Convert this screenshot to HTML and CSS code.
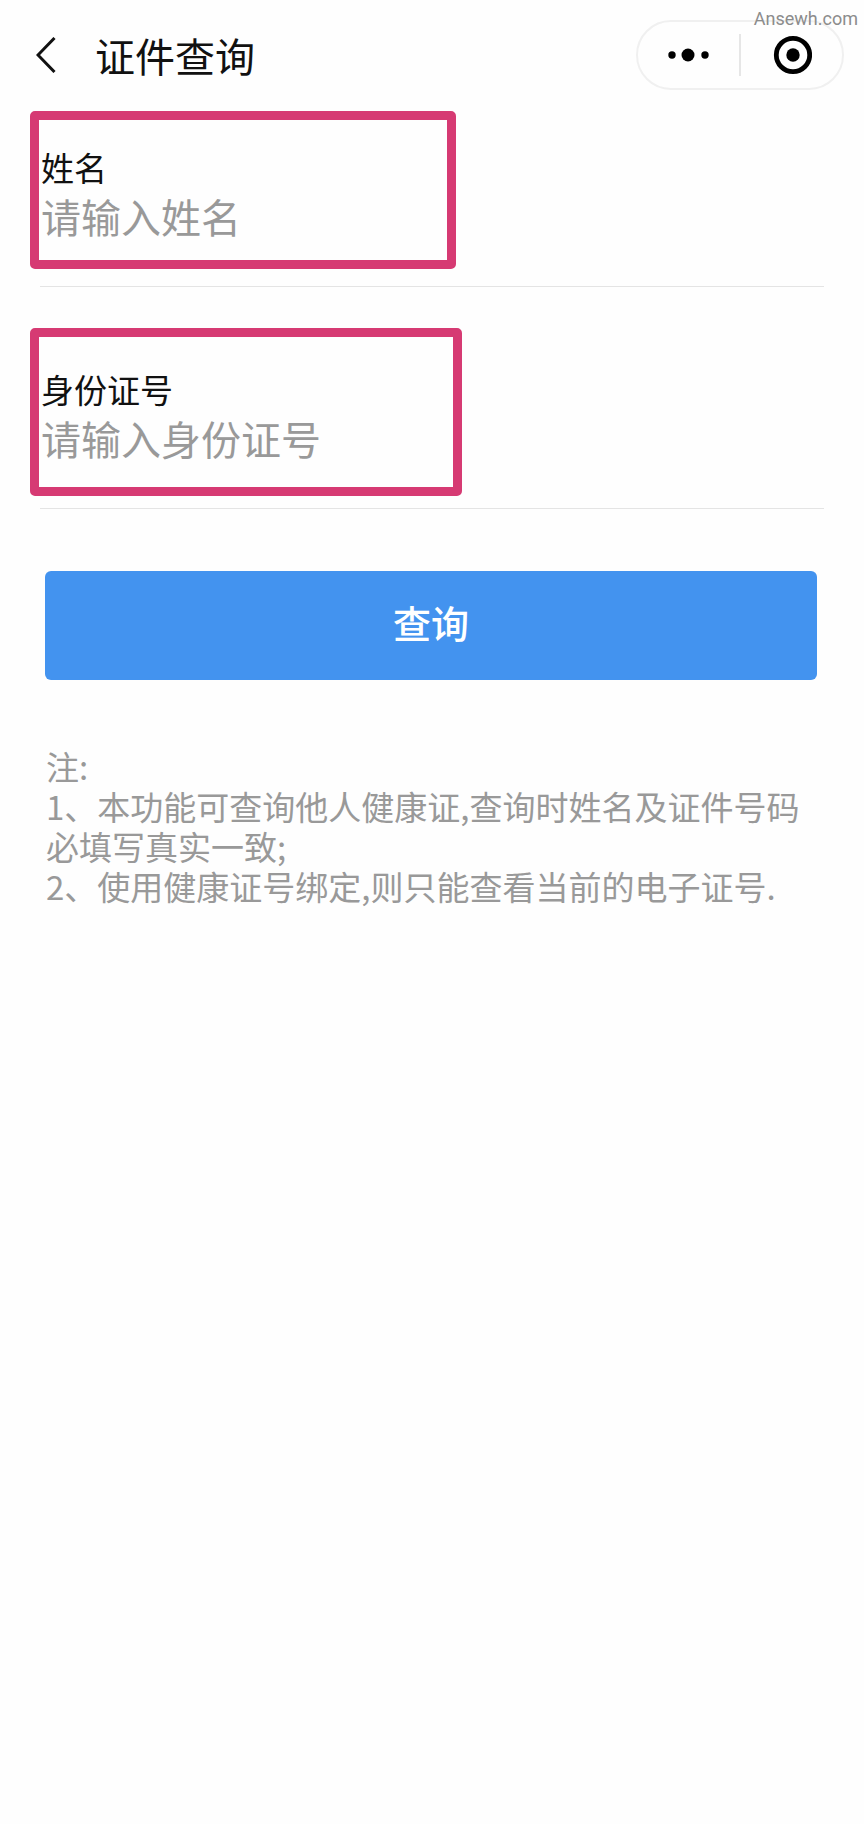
FILE: index.html
```html
<!DOCTYPE html>
<html lang="zh-CN">
<head>
<meta charset="utf-8">
<meta name="viewport" content="width=device-width, initial-scale=1">
<title>证件查询</title>
<link rel="stylesheet" href="styles.css">
</head>
<body>
<header class="navbar">
  <button class="back" type="button" aria-label="返回">
    <svg width="20" height="36" viewBox="0 0 20 36" fill="none" stroke="#111" stroke-width="3"><path d="M18.500 1 2 18l16.500 17"/></svg>
  </button>
  <h1 class="title">证件查询</h1>
  <div class="capsule">
    <button class="capsule-button" type="button" aria-label="更多">
      <svg width="42" height="14" viewBox="0 0 42 14"><circle cx="4" cy="7" r="3.700"/><circle cx="20" cy="7" r="6.500"/><circle cx="37" cy="7" r="3.700"/></svg>
    </button>
    <button class="capsule-button" type="button" aria-label="关闭">
      <svg width="40" height="40" viewBox="0 0 40 40"><circle cx="21" cy="20" r="16.700" fill="none" stroke="#000" stroke-width="4.800"/><circle cx="21" cy="20" r="6.700"/></svg>
    </button>
  </div>
  <span class="watermark">Ansewh.com</span>
</header>
<main>
  <form class="form">
    <div class="field">
      <label class="label" for="name">姓名</label>
      <input class="input" id="name" type="text" placeholder="请输入姓名">
      <span class="highlight highlight-name"></span>
    </div>
    <div class="field">
      <label class="label" for="idno">身份证号</label>
      <input class="input" id="idno" type="text" placeholder="请输入身份证号">
      <span class="highlight highlight-id"></span>
    </div>
    <button class="submit" type="button">查询</button>
  </form>
  <section class="notes">
    <p>注:</p>
    <p>1、本功能可查询他人健康证,查询时姓名及证件号码必填写真实一致;</p>
    <p>2、使用健康证号绑定,则只能查看当前的电子证号.</p>
  </section>
</main>
</body>
</html>
```

FILE: styles.css
```css
* {
  box-sizing: border-box;
}

body {
  margin: 0;
  background: #fefefe;
  color: #111;
  font-family: "Noto Sans CJK SC", sans-serif;
}

button,
input {
  border: 0;
  padding: 0;
  background: none;
  font-family: inherit;
}

.navbar {
  position: relative;
  display: flex;
  align-items: center;
  height: 109px;
  padding: 0 20px 0 36px;
}

.back {
  display: flex;
  width: 59px;
}

.title {
  flex: 1;
  margin: 0;
  font-size: 40px;
  font-weight: 400;
  line-height: 60px;
}

.capsule {
  display: flex;
  align-items: center;
  width: 208px;
  height: 70px;
  border: 2px solid #f0f0f0;
  border-radius: 35px;
}

.capsule-button {
  display: flex;
  flex: 1;
  align-items: center;
  justify-content: center;
  height: 42px;
}

.capsule-button + .capsule-button {
  border-left: 2px solid #e6e6e6;
}

.watermark {
  position: absolute;
  top: 8px;
  right: 6px;
  color: #8c8c8c;
  font-family: Roboto, sans-serif;
  font-size: 18px;
  line-height: 22px;
}

.field {
  position: relative;
  display: flex;
  flex-direction: column;
  margin: 0 40px 44px;
  padding: 35px 0 45px 1px;
  border-bottom: 1px solid #e4e4e4;
}

.label {
  font-size: 33px;
  line-height: 47px;
}

.input {
  width: 100%;
  height: 50px;
  color: #111;
  font-size: 40px;
  outline: 0;
}

.input::placeholder {
  color: #999;
  opacity: 1;
}

.highlight {
  position: absolute;
  left: -10px;
  border: 9px solid #d63a73;
  border-radius: 5px;
  pointer-events: none;
}

.highlight-name {
  top: 2px;
  bottom: 17px;
  width: 426px;
}

.highlight-id {
  top: -3px;
  bottom: 12px;
  width: 432px;
}

.submit {
  display: block;
  width: calc(100% - 92px);
  height: 109px;
  margin: 62px 47px 0 45px;
  padding-bottom: 8px;
  border-radius: 6px;
  background: #4393ef;
  color: #fff;
  font-size: 38px;
  font-weight: 500;
}

.notes {
  padding: 66px 46px;
  color: #999;
  font-size: 33px;
  line-height: 40px;
}

.notes p {
  margin: 0;
}
```
